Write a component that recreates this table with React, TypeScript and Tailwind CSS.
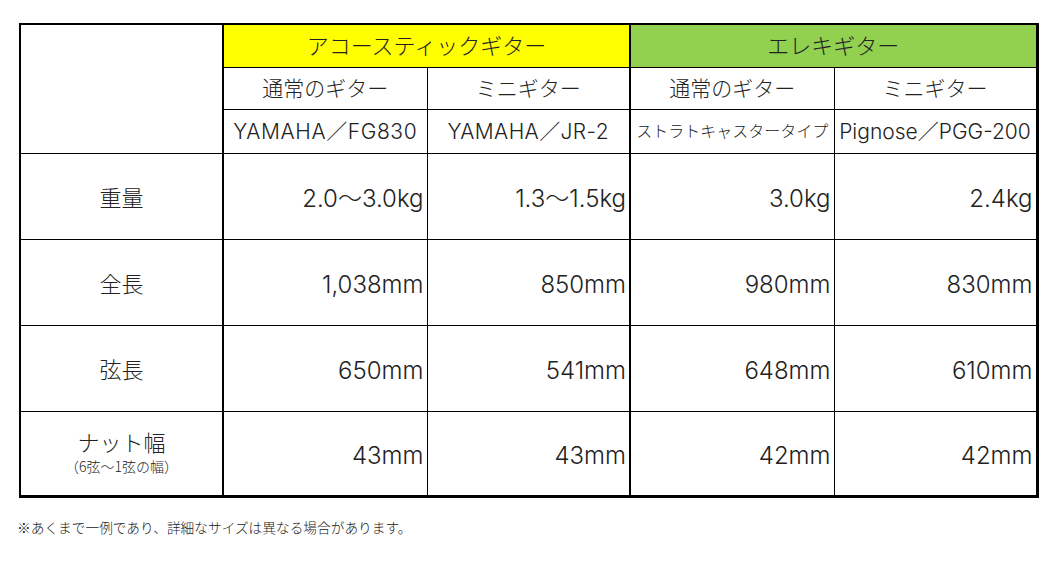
import React from 'react';

const FONT = { fontFamily: "Inter, 'Noto Sans CJK JP', sans-serif" };
const JP = { fontFamily: "'Noto Sans CJK JP', sans-serif" };

const ROWS = [
  { label: '重量', values: ['2.0〜3.0kg', '1.3〜1.5kg', '3.0kg', '2.4kg'] },
  { label: '全長', values: ['1,038mm', '850mm', '980mm', '830mm'] },
  { label: '弦長', values: ['650mm', '541mm', '648mm', '610mm'] },
  { label: 'ナット幅', sub: '（6弦〜1弦の幅）', values: ['43mm', '43mm', '42mm', '42mm'] },
];

export default function App() {
  return (
    <div className="w-[1058px] h-[567px] bg-white text-[#222] font-light" style={FONT}>
      <div className="pt-[23px] pl-[19px]">
        <table className="table-fixed border-collapse border-t-2 border-l-2 border-r-[3px] border-b-[3px] border-black">
          <colgroup>
            <col className="w-[203px]" />
            <col className="w-[204px]" />
            <col className="w-[203px]" />
            <col className="w-[204px]" />
            <col className="w-[203px]" />
          </colgroup>
          <thead>
            <tr className="h-[43px]">
              <th rowSpan={3} className="border-r-2 border-b border-black" />
              <th colSpan={2} className="bg-[#ffff00] border-r-2 border-b border-black text-[22px] font-light leading-none">
                アコースティックギター
              </th>
              <th colSpan={2} className="bg-[#92d050] border-b border-black text-[22px] font-light leading-none">
                エレキギター
              </th>
            </tr>
            <tr className="h-[42px] text-[21px] leading-none">
              <th className="border-r border-b border-black font-light">通常のギター</th>
              <th className="border-r-2 border-b border-black font-light">ミニギター</th>
              <th className="border-r border-b border-black font-light">通常のギター</th>
              <th className="border-b border-black font-light">ミニギター</th>
            </tr>
            <tr className="h-[44px] text-[21px] leading-none">
              <th className="border-r border-b border-black font-light whitespace-nowrap tracking-[0.6px]">YAMAHA／FG830</th>
              <th className="border-r-2 border-b border-black font-light whitespace-nowrap tracking-[0.4px]">YAMAHA／JR-2</th>
              <th className="border-r border-b border-black font-light text-[16px] whitespace-nowrap">ストラトキャスタータイプ</th>
              <th className="border-b border-black font-light whitespace-nowrap">Pignose／PGG-200</th>
            </tr>
          </thead>
          <tbody>
            {ROWS.map((row, i) => (
              <tr key={row.label} className={i === ROWS.length - 1 ? 'h-[85px]' : 'h-[86px]'}>
                <td className="border-r-2 border-b border-black text-center align-middle" style={JP}>
                  <div className={`text-[22px] leading-[24px] ${row.sub ? '-mt-[4px]' : ''}`}>{row.label}</div>
                  {row.sub && <div className="text-[14px] leading-[16px] mt-[5px]">{row.sub}</div>}
                </td>
                {row.values.map((v, j) => (
                  <td
                    key={j}
                    className={`border-b border-black text-right align-middle pr-[3px] pt-[6px] text-[24px] leading-none whitespace-nowrap ${
                      j === 1 ? 'border-r-2' : j < 3 ? 'border-r' : ''
                    }`}
                  >
                    {v}
                  </td>
                ))}
              </tr>
            ))}
          </tbody>
        </table>
        <p className="mt-[23px] -ml-[2px] text-[13.7px] leading-none" style={JP}>
          ※あくまで一例であり、詳細なサイズは異なる場合があります。
        </p>
      </div>
    </div>
  );
}
